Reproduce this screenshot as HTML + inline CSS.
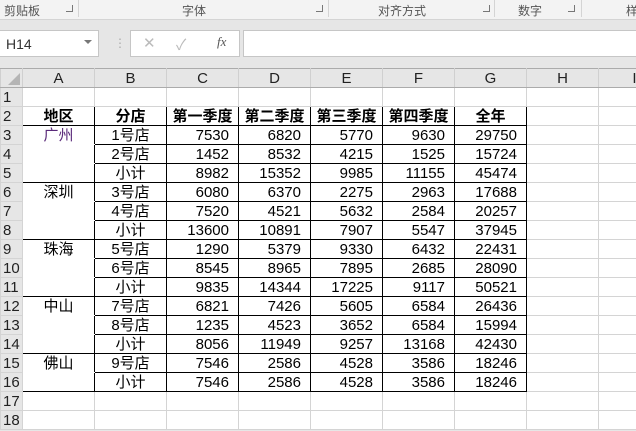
<!DOCTYPE html><html><head><meta charset="utf-8"><style>
*{margin:0;padding:0;box-sizing:border-box}
body{width:636px;height:431px;overflow:hidden;background:#e6e6e6;font-family:"Liberation Sans","Noto Sans CJK SC",sans-serif;position:relative}
.rib{position:absolute;top:0;left:0;width:636px;height:20px;background:#f3f3f3;border-bottom:1px solid #d4d4d4;font-size:12px;color:#555}
.rib span{position:absolute;top:2px}
.rib i{position:absolute;top:5px;width:7px;height:7px;border-right:1px solid #777;border-bottom:1px solid #777}
.sep{position:absolute;top:0;width:1px;height:17px;background:#d4d4d4}
.box{position:absolute;background:#fff;border:1px solid #c6c6c6}
.g{position:absolute;left:0;top:68px;width:670px;border-collapse:collapse;table-layout:fixed;background:#fff}
.g td{height:19px;border:1px solid #d4d4d4;font-size:15px;text-align:center;padding:0;line-height:17px;white-space:nowrap;overflow:hidden}
.g td.h{background:#e6e6e6;color:#222;border-color:#ababab #d0d0d0 #ababab #d0d0d0}
.g td.r{background:#e6e6e6;text-align:left;padding-left:2px;color:#222}
.g td.n{text-align:right;padding-right:9px}
.b{border:1px solid #000!important}
.nt{border-top:1px solid #fff!important}
.nb{border-bottom:1px solid #fff!important}
</style></head><body>
<div class="rib">
<span style="left:4px">剪贴板</span><i style="left:66px"></i><div class="sep" style="left:78px"></div>
<span style="left:182px">字体</span><i style="left:316px"></i><div class="sep" style="left:328px"></div>
<span style="left:378px">对齐方式</span><i style="left:483px"></i><div class="sep" style="left:494px"></div>
<span style="left:518px">数字</span><i style="left:568px"></i><div class="sep" style="left:581px"></div>
<span style="left:626px">样</span>
</div>
<div class="box" style="left:-1px;top:30px;width:100px;height:27px;font-size:14px;color:#333;padding:5px 0 0 6px">H14<span style="position:absolute;right:6px;top:9px;border:4px solid transparent;border-top:4px solid #777"></span></div>
<div style="position:absolute;left:114px;top:36px;color:#aaa;font-size:12px">⋮</div>
<div class="box" style="left:130px;top:30px;width:110px;height:27px;color:#bbb;font-size:15px">
<span style="position:absolute;left:12px;top:3px">✕</span><span style="position:absolute;left:45px;top:3px">✓</span><span style="position:absolute;left:86px;top:3px;color:#555;font-family:'Liberation Serif',serif;font-style:italic;font-size:13px">fx</span></div>
<div class="box" style="left:243px;top:30px;width:400px;height:27px"></div>
<table class="g">
<colgroup><col style="width:22px"><col style="width:72px"><col style="width:72px"><col style="width:72px"><col style="width:72px"><col style="width:72px"><col style="width:72px"><col style="width:72px"><col style="width:72px"><col style="width:72px"></colgroup>
<tr><td class="h" style="position:relative"><span style="position:absolute;right:2px;bottom:2px;border:6px solid transparent;border-right-color:#b5b5b5;border-bottom-color:#b5b5b5"></span></td><td class="h">A</td><td class="h">B</td><td class="h">C</td><td class="h">D</td><td class="h">E</td><td class="h">F</td><td class="h">G</td><td class="h">H</td><td class="h">I</td></tr>
<tr><td class="r">1</td><td></td><td></td><td></td><td></td><td></td><td></td><td></td><td></td><td></td></tr>
<tr><td class="r">2</td><td class="b"><b>地区</b></td><td class="b"><b>分店</b></td><td class="b"><b>第一季度</b></td><td class="b"><b>第二季度</b></td><td class="b"><b>第三季度</b></td><td class="b"><b>第四季度</b></td><td class="b"><b>全年</b></td><td></td><td></td></tr>
<tr><td class="r">3</td><td class="b nb" style="color:#5a2a7a">广州</td><td class="b">1号店</td><td class="b n">7530</td><td class="b n">6820</td><td class="b n">5770</td><td class="b n">9630</td><td class="b n">29750</td><td></td><td></td></tr>
<tr><td class="r">4</td><td class="b nt nb"></td><td class="b">2号店</td><td class="b n">1452</td><td class="b n">8532</td><td class="b n">4215</td><td class="b n">1525</td><td class="b n">15724</td><td></td><td></td></tr>
<tr><td class="r">5</td><td class="b nt"></td><td class="b">小计</td><td class="b n">8982</td><td class="b n">15352</td><td class="b n">9985</td><td class="b n">11155</td><td class="b n">45474</td><td></td><td></td></tr>
<tr><td class="r">6</td><td class="b nb">深圳</td><td class="b">3号店</td><td class="b n">6080</td><td class="b n">6370</td><td class="b n">2275</td><td class="b n">2963</td><td class="b n">17688</td><td></td><td></td></tr>
<tr><td class="r">7</td><td class="b nt nb"></td><td class="b">4号店</td><td class="b n">7520</td><td class="b n">4521</td><td class="b n">5632</td><td class="b n">2584</td><td class="b n">20257</td><td></td><td></td></tr>
<tr><td class="r">8</td><td class="b nt"></td><td class="b">小计</td><td class="b n">13600</td><td class="b n">10891</td><td class="b n">7907</td><td class="b n">5547</td><td class="b n">37945</td><td></td><td></td></tr>
<tr><td class="r">9</td><td class="b nb">珠海</td><td class="b">5号店</td><td class="b n">1290</td><td class="b n">5379</td><td class="b n">9330</td><td class="b n">6432</td><td class="b n">22431</td><td></td><td></td></tr>
<tr><td class="r">10</td><td class="b nt nb"></td><td class="b">6号店</td><td class="b n">8545</td><td class="b n">8965</td><td class="b n">7895</td><td class="b n">2685</td><td class="b n">28090</td><td></td><td></td></tr>
<tr><td class="r">11</td><td class="b nt"></td><td class="b">小计</td><td class="b n">9835</td><td class="b n">14344</td><td class="b n">17225</td><td class="b n">9117</td><td class="b n">50521</td><td></td><td></td></tr>
<tr><td class="r">12</td><td class="b nb">中山</td><td class="b">7号店</td><td class="b n">6821</td><td class="b n">7426</td><td class="b n">5605</td><td class="b n">6584</td><td class="b n">26436</td><td></td><td></td></tr>
<tr><td class="r">13</td><td class="b nt nb"></td><td class="b">8号店</td><td class="b n">1235</td><td class="b n">4523</td><td class="b n">3652</td><td class="b n">6584</td><td class="b n">15994</td><td></td><td></td></tr>
<tr><td class="r">14</td><td class="b nt"></td><td class="b">小计</td><td class="b n">8056</td><td class="b n">11949</td><td class="b n">9257</td><td class="b n">13168</td><td class="b n">42430</td><td></td><td></td></tr>
<tr><td class="r">15</td><td class="b nb">佛山</td><td class="b">9号店</td><td class="b n">7546</td><td class="b n">2586</td><td class="b n">4528</td><td class="b n">3586</td><td class="b n">18246</td><td></td><td></td></tr>
<tr><td class="r">16</td><td class="b nt"></td><td class="b">小计</td><td class="b n">7546</td><td class="b n">2586</td><td class="b n">4528</td><td class="b n">3586</td><td class="b n">18246</td><td></td><td></td></tr>
<tr><td class="r">17</td><td></td><td></td><td></td><td></td><td></td><td></td><td></td><td></td><td></td></tr>
<tr><td class="r">18</td><td></td><td></td><td></td><td></td><td></td><td></td><td></td><td></td><td></td></tr>
</table>
</body></html>
